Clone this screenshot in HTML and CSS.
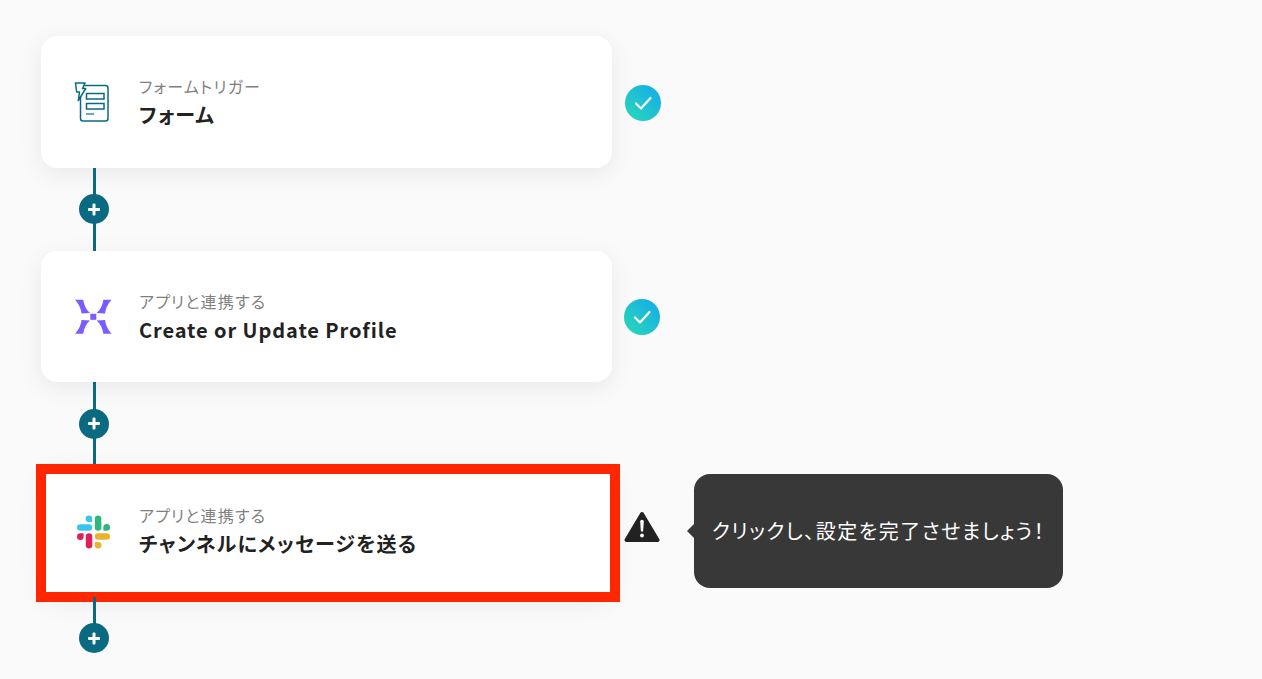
FILE: index.html
```html
<!DOCTYPE html>
<html lang="ja">
<head>
	<meta charset="utf-8">
	<title>フロー</title>
	<link rel="stylesheet" href="styles.css">
</head>
<body>
<div class="flow">

	<div class="step">
		<div class="card">
			<svg class="icon" viewBox="0 0 40 40">
				<rect x="7.5" y="3.5" width="27.500" height="35.500" rx="2.500" fill="#fff" stroke="#0a6a82" stroke-width="1.500"/>
				<path d="M2.500 1h9.500L9.500 6.500h3.200L5.300 18.500 6.500 10H3.700z" fill="#fff" stroke="#0a6a82" stroke-width="1.500" stroke-linejoin="round"/>
				<rect x="13.500" y="11.500" width="17.500" height="5.500" fill="none" stroke="#0a6a82" stroke-width="1.500"/>
				<rect x="13.500" y="21.500" width="17.500" height="5.500" fill="none" stroke="#0a6a82" stroke-width="1.500"/>
				<path d="M13 32h8" stroke="#0a6a82" stroke-width="1.200"/>
			</svg>
			<div class="text">
				<div class="sub">フォームトリガー</div>
				<div class="name">フォーム</div>
			</div>
		</div>
		<div class="status check">
			<svg viewBox="0 0 36 36" width="36" height="36"><path d="M11 18.500l5 5 9.500-10.500" fill="none" stroke="#fff" stroke-width="2.200" stroke-linecap="round" stroke-linejoin="round"/></svg>
		</div>
	</div>
	<div class="link"><span class="plus"></span></div>

	<div class="step">
		<div class="card">
			<svg class="icon" viewBox="0 0 40 40">
				<g fill="#7b5cff">
					<path d="M2 3.800h8.200C11 9 13 13.500 17 17L8.500 17.500C8 12 5 7 2 3.800z"/>
					<path d="M2 3.800h8.200C11 9 13 13.500 17 17L8.500 17.500C8 12 5 7 2 3.800z" transform="matrix(-1 0 0 1 40.600 0)"/>
					<path d="M2 3.800h8.200C11 9 13 13.500 17 17L8.500 17.500C8 12 5 7 2 3.800z" transform="matrix(1 0 0 -1 0 41.500)"/>
					<path d="M2 3.800h8.200C11 9 13 13.500 17 17L8.500 17.500C8 12 5 7 2 3.800z" transform="matrix(-1 0 0 -1 40.600 41.500)"/>
					<rect x="17.300" y="17.800" width="6" height="6"/>
				</g>
			</svg>
			<div class="text">
				<div class="sub">アプリと連携する</div>
				<div class="name latin">Create or Update Profile</div>
			</div>
		</div>
		<div class="status check second">
			<svg viewBox="0 0 36 36" width="36" height="36"><path d="M11 18.500l5 5 9.500-10.500" fill="none" stroke="#fff" stroke-width="2.200" stroke-linecap="round" stroke-linejoin="round"/></svg>
		</div>
	</div>
	<div class="link"><span class="plus"></span></div>

	<div class="step">
		<div class="card">
			<svg class="icon" viewBox="0 0 40 40">
				<g transform="translate(3 3.500) scale(1.030)">
					<path d="M12.500 1a3.200 3.200 0 0 0 0 6.400h3.200V4.200A3.200 3.200 0 0 0 12.500 1z" fill="#36c5f0"/>
					<rect x="1" y="9.500" width="14.700" height="6.300" rx="3.150" fill="#36c5f0"/>
					<rect x="18.300" y="1" width="6.300" height="14.700" rx="3.150" fill="#2eb67d"/>
					<path d="M33 12.500a3.200 3.200 0 0 0-6.400 0v3.200h3.200a3.200 3.200 0 0 0 3.200-3.200z" fill="#2eb67d"/>
					<path d="M1 21.500a3.200 3.200 0 0 0 6.400 0v-3.200H4.200A3.200 3.200 0 0 0 1 21.500z" fill="#e01e5a"/>
					<rect x="9.500" y="18.300" width="6.300" height="14.700" rx="3.150" fill="#e01e5a"/>
					<rect x="18.300" y="18.300" width="14.700" height="6.300" rx="3.150" fill="#ecb22e"/>
					<path d="M21.500 33a3.200 3.200 0 0 0 0-6.400h-3.200v3.200a3.200 3.200 0 0 0 3.200 3.200z" fill="#ecb22e"/>
				</g>
			</svg>
			<div class="text">
				<div class="sub">アプリと連携する</div>
				<div class="name">チャンネルにメッセージを送る</div>
			</div>
			<div class="highlight"></div>
		</div>
		<div class="status warn">
			<svg viewBox="0 0 36 32" width="36" height="32">
				<path d="M18 3L33.500 29H2.500z" fill="#222" stroke="#222" stroke-width="4" stroke-linejoin="round"/>
				<path d="M16.200 10.500a1.800 1.800 0 0 1 3.600 0l-.7 10h-2.200z" fill="#fff"/>
				<circle cx="18" cy="24.500" r="1.900" fill="#fff"/>
			</svg>
		</div>
		<div class="tip">クリックし、設定を完了させましょう！</div>
	</div>
	<div class="link last"><span class="plus"></span></div>

</div>
</body>
</html>
```

FILE: styles.css
```css
body {
	background: #fafafa;
	font-family: "Noto Sans CJK JP", "Noto Sans", sans-serif;
	font-feature-settings: "palt";
	color: #222;
	margin: 0px;
	height: 679px;
	overflow: hidden;
}
.flow {
	padding: 36px 0 0 41px;
}
.step {
	display: flex;
	align-items: center;
	height: 131.5px;
}
.card {
	position: relative;
	display: flex;
	align-items: center;
	box-sizing: border-box;
	width: 571px;
	height: 131.5px;
	padding-left: 32px;
	background: #fff;
	border-radius: 16px;
	box-shadow: 0 6px 24px rgba(0,0,0,0.07);
}
.icon {
	flex: none;
	width: 40px;
	height: 40px;
	margin-right: 26px;
}
.text {
	display: flex;
	flex-direction: column;
	gap: 3px;
	padding-top: 2px;
}
.sub {
	font-size: 16px;
	line-height: 22px;
	color: #7f7f7f;
	letter-spacing: 1.2px;
}
.name {
	font-size: 20px;
	line-height: 30px;
	font-weight: 700;
	color: #222;
	letter-spacing: 1.15px;
}
.name.latin {
	letter-spacing: 0.92px;
}
.highlight {
	position: absolute;
	left: -5px;
	right: -8px;
	top: -1px;
	bottom: -5.5px;
	border: 10px solid #ff2600;
}
.status {
	flex: none;
	width: 36px;
	height: 36px;
	margin-left: 13px;
}
.check {
	margin-top: 2px;
	border-radius: 50%;
	background: linear-gradient(45deg, #2adbb5, #14a8ee);
}
.check.second {
	margin-left: 12px;
}
.warn {
	display: flex;
	align-items: center;
	margin: 0 0 8px 12px;
}
.tip {
	position: relative;
	box-sizing: border-box;
	display: flex;
	align-items: center;
	justify-content: center;
	width: 369px;
	height: 114px;
	margin-left: 34px;
	background: #383838;
	color: #fff;
	font-size: 20px;
	letter-spacing: 1.5px;
	border-radius: 16px;
}
.tip::before {
	content: "";
	position: absolute;
	left: -7px;
	top: 50%;
	margin-top: -7px;
	border-top: 7px solid transparent;
	border-bottom: 7px solid transparent;
	border-right: 7px solid #383838;
}
.link {
	position: relative;
	width: 106px;
	height: 83px;
	display: flex;
	align-items: center;
	justify-content: center;
}
.link::before {
	content: "";
	position: absolute;
	left: 52px;
	top: 0;
	bottom: 0;
	width: 3px;
	background: #0a6a82;
}
.link.last::before {
	bottom: 40px;
}
.plus {
	position: relative;
	width: 30px;
	height: 30px;
	border-radius: 50%;
	background: #0a6a82;
}
.plus::before, .plus::after {
	content: "";
	position: absolute;
	left: 9px;
	top: 13.5px;
	width: 12px;
	height: 3px;
	border-radius: 1px;
	background: #fff;
}
.plus::after {
	transform: rotate(90deg);
}
```
